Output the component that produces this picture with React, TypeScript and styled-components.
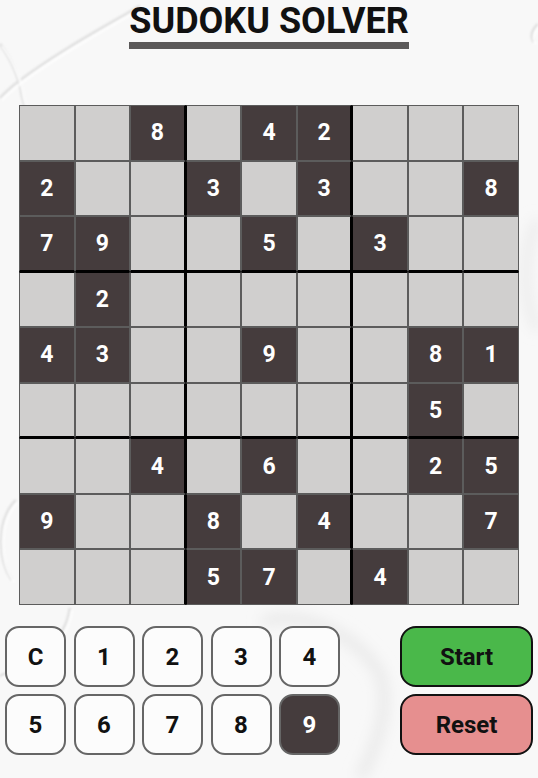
import React from 'react';
import styled, { createGlobalStyle } from 'styled-components';

const GlobalStyle = createGlobalStyle`
  html, body {
    margin: 0;
    padding: 0;
  }
  body {
    background: #f8f8f8;
    font-family: Roboto, "Liberation Sans", Arial, sans-serif;
  }
`;

const puzzle: (number | null)[][] = [
  [null, null, 8, null, 4, 2, null, null, null],
  [2, null, null, 3, null, 3, null, null, 8],
  [7, 9, null, null, 5, null, 3, null, null],
  [null, 2, null, null, null, null, null, null, null],
  [4, 3, null, null, 9, null, null, 8, 1],
  [null, null, null, null, null, null, null, 5, null],
  [null, null, 4, null, 6, null, null, 2, 5],
  [9, null, null, 8, null, 4, null, null, 7],
  [null, null, null, 5, 7, null, 4, null, null],
];

const Page = styled.div`
  position: relative;
  width: 538px;
  height: 778px;
  overflow: hidden;
`;

// marble-ish backdrop, sits under everything
const Backdrop = styled.svg`
  position: absolute;
  inset: 0;
  z-index: 0;
  pointer-events: none;
`;

const Content = styled.main`
  position: relative;
  z-index: 1;
  display: flex;
  flex-direction: column;
  align-items: center;
`;

const Title = styled.h1`
  margin: 1px 0 0;
  padding-bottom: 1px;
  border-bottom: 7px solid #5b5959;
  font-size: 36px;
  line-height: 40px;
  font-weight: 700;
  color: #111;
`;

const Board = styled.div`
  margin-top: 56px;
  width: 500px;
  height: 500px;
  display: grid;
  grid-template-columns: repeat(9, 1fr);
  grid-template-rows: repeat(9, 1fr);
`;

const Cell = styled.div<{ $dark: boolean; $row: number; $col: number }>`
  box-sizing: border-box;
  display: flex;
  align-items: center;
  justify-content: center;
  background: ${({ $dark }) => ($dark ? '#453c3d' : '#d0cfce')};
  color: #fff;
  font-size: 23px;
  font-weight: 700;
  border: 1px solid #5c5c5c;
  ${({ $col }) => ($col === 2 || $col === 5 ? 'border-right: 2px solid #000;' : '')}
  ${({ $col }) => ($col === 3 || $col === 6 ? 'border-left: 1px solid #000;' : '')}
  ${({ $row }) => ($row === 2 || $row === 5 ? 'border-bottom: 2px solid #000;' : '')}
  ${({ $row }) => ($row === 3 || $row === 6 ? 'border-top: 1px solid #000;' : '')}
`;

const Controls = styled.div`
  margin-top: 21px;
  width: 528px;
  display: flex;
  justify-content: space-between;
`;

const Keypad = styled.div`
  display: grid;
  grid-template-columns: repeat(5, 61px);
  grid-auto-rows: 61px;
  column-gap: 7.5px;
  row-gap: 7px;
`;

const Key = styled.button<{ $active?: boolean }>`
  box-sizing: border-box;
  padding: 0;
  border: 2px solid #666;
  border-radius: 14px;
  background: ${({ $active }) => ($active ? '#453c3d' : '#fcfcfc')};
  color: ${({ $active }) => ($active ? '#fff' : '#111')};
  font-family: inherit;
  font-size: 24px;
  font-weight: 700;
`;

const Actions = styled.div`
  display: flex;
  flex-direction: column;
  gap: 7px;
`;

const ActionButton = styled.button<{ $tone: 'go' | 'stop' }>`
  box-sizing: border-box;
  width: 133px;
  height: 61px;
  border: 2px solid #111;
  border-radius: 16px;
  background: ${({ $tone }) => ($tone === 'go' ? '#4ab84a' : '#e68f8f')};
  color: #111;
  font-family: inherit;
  font-size: 24px;
  font-weight: 700;
`;

const keys = ['C', '1', '2', '3', '4', '5', '6', '7', '8', '9'];

const ridges = [
  'M140 6 C110 24 60 50 18 82 C10 88 4 94 0 98',
  'M0 44 C12 60 20 80 22 96 C24 104 26 110 28 118',
  'M70 608 C66 640 40 660 0 676',
  'M16 500 C-4 520 -2 560 12 580',
  'M538 24 C532 30 530 36 534 42',
];

export default function App() {
  return (
    <>
      <GlobalStyle />
      <Page>
        <Backdrop width="538" height="778" viewBox="0 0 538 778">
          <defs>
            <filter id="soft" x="-20%" y="-20%" width="140%" height="140%">
              <feGaussianBlur stdDeviation="1.3" />
            </filter>
            <filter id="wide" x="-30%" y="-30%" width="160%" height="160%">
              <feGaussianBlur stdDeviation="7" />
            </filter>
          </defs>
          <g fill="none" stroke="#e1e1e1" strokeWidth="3" filter="url(#soft)">
            {ridges.map((d) => (
              <path key={d} d={d} />
            ))}
          </g>
          <g fill="none" stroke="#ffffff" strokeWidth="2" filter="url(#soft)" transform="translate(2 2)">
            {ridges.map((d) => (
              <path key={d} d={d} />
            ))}
          </g>
          <g fill="none" stroke="#e6e6e6" filter="url(#wide)">
            <path d="M262 622 C300 610 350 630 378 670 C392 700 380 740 360 778" strokeWidth="9" />
            <path d="M538 220 C522 250 522 300 538 330" strokeWidth="7" />
          </g>
        </Backdrop>
        <Content>
          <Title>SUDOKU SOLVER</Title>
          <Board>
            {puzzle.map((row, r) =>
              row.map((value, c) => (
                <Cell key={`${r}-${c}`} $dark={value !== null} $row={r} $col={c}>
                  {value}
                </Cell>
              )),
            )}
          </Board>
          <Controls>
            <Keypad>
              {keys.map((k) => (
                <Key key={k} $active={k === '9'}>
                  {k}
                </Key>
              ))}
            </Keypad>
            <Actions>
              <ActionButton $tone="go">Start</ActionButton>
              <ActionButton $tone="stop">Reset</ActionButton>
            </Actions>
          </Controls>
        </Content>
      </Page>
    </>
  );
}
